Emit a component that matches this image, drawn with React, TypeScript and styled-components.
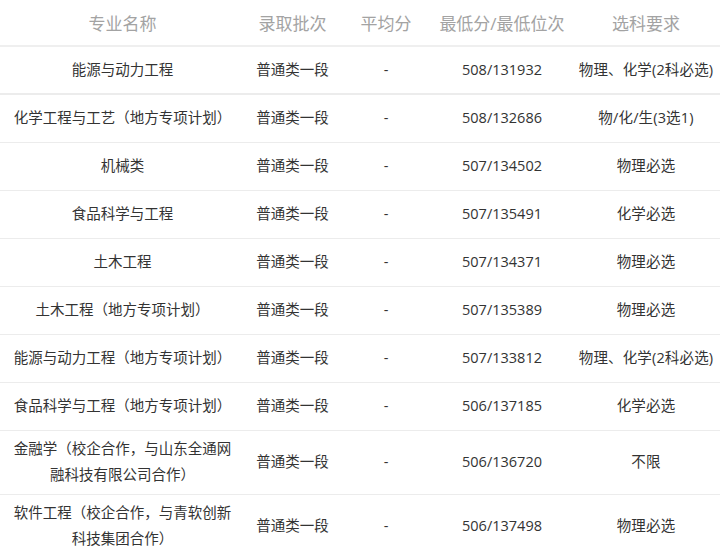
import React from "react";
import styled, { createGlobalStyle } from "styled-components";

const Global = createGlobalStyle`
  html, body { margin: 0; padding: 0; background: #fff; }
  body { font-family: "Open Sans", "Noto Sans CJK SC", sans-serif; }
`;

const Table = styled.table`
  width: 720px;
  border-collapse: collapse;
  table-layout: fixed;
  font-family: "Open Sans", "Noto Sans CJK SC", sans-serif;
`;

const Col = styled.col<{ $w: number }>`
  width: ${(p) => p.$w}px;
`;

const HeadCell = styled.th`
  height: 45px;
  padding: 0;
  font-size: 17px;
  font-weight: normal;
  color: #a3a3a3;
  text-align: center;
  vertical-align: middle;
  border-bottom: 2px solid #efefef;
  white-space: nowrap;
`;

const Row = styled.tr<{ $thick?: boolean }>`
  height: 48px;
  border-bottom: ${(p) => (p.$thick ? "2px solid #ececec" : "1px solid #ececec")};
`;

const Cell = styled.td<{ $pad?: number }>`
  padding: 5px ${(p) => p.$pad ?? 0}px;
  font-size: 14.5px;
  line-height: 26.5px;
  color: #333;
  text-align: center;
  vertical-align: middle;
`;

const NoWrap = styled(Cell)`
  white-space: nowrap;
`;

const Subjects = styled(NoWrap)`
  letter-spacing: 0.15px;
`;

const rows = [
  ["能源与动力工程", "普通类一段", "-", "508/131932", "物理、化学(2科必选)"],
  ["化学工程与工艺（地方专项计划）", "普通类一段", "-", "508/132686", "物/化/生(3选1)"],
  ["机械类", "普通类一段", "-", "507/134502", "物理必选"],
  ["食品科学与工程", "普通类一段", "-", "507/135491", "化学必选"],
  ["土木工程", "普通类一段", "-", "507/134371", "物理必选"],
  ["土木工程（地方专项计划）", "普通类一段", "-", "507/135389", "物理必选"],
  ["能源与动力工程（地方专项计划）", "普通类一段", "-", "507/133812", "物理、化学(2科必选)"],
  ["食品科学与工程（地方专项计划）", "普通类一段", "-", "506/137185", "化学必选"],
  ["金融学（校企合作，与山东全通网融科技有限公司合作）", "普通类一段", "-", "506/136720", "不限"],
  ["软件工程（校企合作，与青软创新科技集团合作）", "普通类一段", "-", "506/137498", "物理必选"],
];

export default function App() {
  return (
    <>
      <Global />
      <Table>
        <colgroup>
          <Col $w={245} />
          <Col $w={95} />
          <Col $w={92} />
          <Col $w={140} />
          <Col $w={148} />
        </colgroup>
        <thead>
          <tr>
            <HeadCell>专业名称</HeadCell>
            <HeadCell>录取批次</HeadCell>
            <HeadCell>平均分</HeadCell>
            <HeadCell>最低分/最低位次</HeadCell>
            <HeadCell>选科要求</HeadCell>
          </tr>
        </thead>
        <tbody>
          {rows.map((r, i) => (
            <Row key={i} $thick={i === 0}>
              <Cell $pad={12}>{r[0]}</Cell>
              <NoWrap>{r[1]}</NoWrap>
              <NoWrap>{r[2]}</NoWrap>
              <NoWrap>{r[3]}</NoWrap>
              <Subjects>{r[4]}</Subjects>
            </Row>
          ))}
        </tbody>
      </Table>
    </>
  );
}
